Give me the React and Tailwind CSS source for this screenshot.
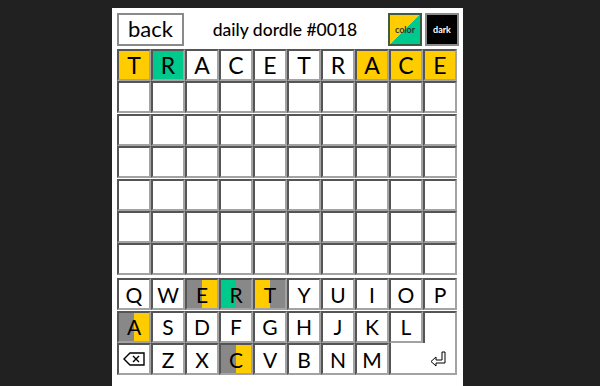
import React from "react";

const Y = "#ffcc00";
const G = "#00c98d";

const guess = [
  { l: "T", c: "bg-[#ffcc00]" },
  { l: "R", c: "bg-[#00c98d]" },
  { l: "A", c: "bg-white" },
  { l: "C", c: "bg-white" },
  { l: "E", c: "bg-white" },
  { l: "T", c: "bg-white" },
  { l: "R", c: "bg-white" },
  { l: "A", c: "bg-[#ffcc00]" },
  { l: "C", c: "bg-[#ffcc00]" },
  { l: "E", c: "bg-[#ffcc00]" },
];

const keyBg = {
  E: "bg-[linear-gradient(to_right,#888888_50%,#ffcc00_50%)]",
  R: "bg-[linear-gradient(to_right,#00c98d_50%,#888888_50%)]",
  T: "bg-[linear-gradient(to_right,#ffcc00_50%,#888888_50%)]",
  A: "bg-[linear-gradient(to_right,#888888_50%,#ffcc00_50%)]",
  C: "bg-[linear-gradient(to_right,#888888_50%,#ffcc00_50%)]",
};

const cell =
  "w-[34px] h-[32px] border-2 border-t-[#555] border-l-[#555] border-r-[#a3a3a3] border-b-[#a3a3a3] flex items-center justify-center";

const Tile = ({ letter, color = "bg-white" }) => (
  <div className={`${cell} ${color} text-[23px] leading-none`}>{letter}</div>
);

const Key = ({ k }) => (
  <div className={`${cell} ${keyBg[k] || "bg-white"} text-[21px] leading-none`}>{k}</div>
);

const Backspace = () => (
  <svg width="22" height="14" viewBox="0 0 22 14" fill="none" stroke="#000" strokeWidth="1.4">
    <path d="M7 1 H21 V13 H7 L1 7 Z" />
    <path d="M10 4 L16 10 M16 4 L10 10" />
  </svg>
);

const Enter = () => (
  <svg width="16" height="16" viewBox="0 0 16 16" fill="none" stroke="#000" strokeWidth="1">
    <path d="M12 1 H15 V12 H6 V15 L1 10.5 L6 6 V9 H12 Z" />
  </svg>
);

export default function App() {
  const emptyRows = Array.from({ length: 6 });
  return (
    <div className="w-[600px] h-[386px] bg-[#212121] overflow-hidden font-['Lato','Noto_Sans',sans-serif] text-black">
      <div className="ml-[112px] mt-[8px] w-[351px] h-[378px] bg-white pl-[5px] pt-[5px]">
        <div className="flex items-center w-[342px] h-[33px]">
          <div className="w-[67px] h-[33px] border-2 border-[#8a8a8a] flex items-center justify-center text-[22px] leading-none pb-[2px]">
            back
          </div>
          <div className="flex-1 text-center text-[17.5px] font-medium leading-none pr-[2px]">
            daily dordle #0018
          </div>
          <div className="w-[34px] h-[33px] border-2 border-[#3f5a45] bg-[linear-gradient(to_bottom_right,#ffcc00_50%,#00c98d_50%)] flex items-center justify-center text-[9px] font-bold text-[#333]">
            color
          </div>
          <div className="ml-[3px] w-[34px] h-[33px] border-2 border-[#8a8a8a] bg-black flex items-center justify-center text-[9px] font-bold text-white">
            dark
          </div>
        </div>

        <div className="mt-[3px] flex flex-col">
          <div className="flex">
            {guess.map((g, i) => (
              <Tile key={i} letter={g.l} color={g.c} />
            ))}
          </div>
          {emptyRows.map((_, r) => (
            <div key={r} className="flex mt-[0.4px]">
              {Array.from({ length: 10 }).map((_, i) => (
                <Tile key={i} />
              ))}
            </div>
          ))}
        </div>

        <div className="mt-[3px] flex flex-col">
          <div className="flex">
            {"QWERTYUIOP".split("").map((k) => (
              <Key key={k} k={k} />
            ))}
          </div>
          <div className="flex mt-[0.5px]">
            {"ASDFGHJKL".split("").map((k) => (
              <Key key={k} k={k} />
            ))}
            <div className="w-[34px] h-[32.5px] border-2 border-b-0 border-t-[#555] border-l-[#555] border-r-[#a3a3a3] bg-white" />
          </div>
          <div className="flex">
            <div className={`${cell} bg-white`}>
              <Backspace />
            </div>
            {"ZXCVBNM".split("").map((k) => (
              <Key key={k} k={k} />
            ))}
            <div className="w-[68px] h-[32px] border-2 border-t-0 border-l-[#555] border-r-[#a3a3a3] border-b-[#a3a3a3] bg-white flex items-center justify-end pr-[9px] pt-[1px]">
              <Enter />
            </div>
          </div>
        </div>
      </div>
    </div>
  );
}
